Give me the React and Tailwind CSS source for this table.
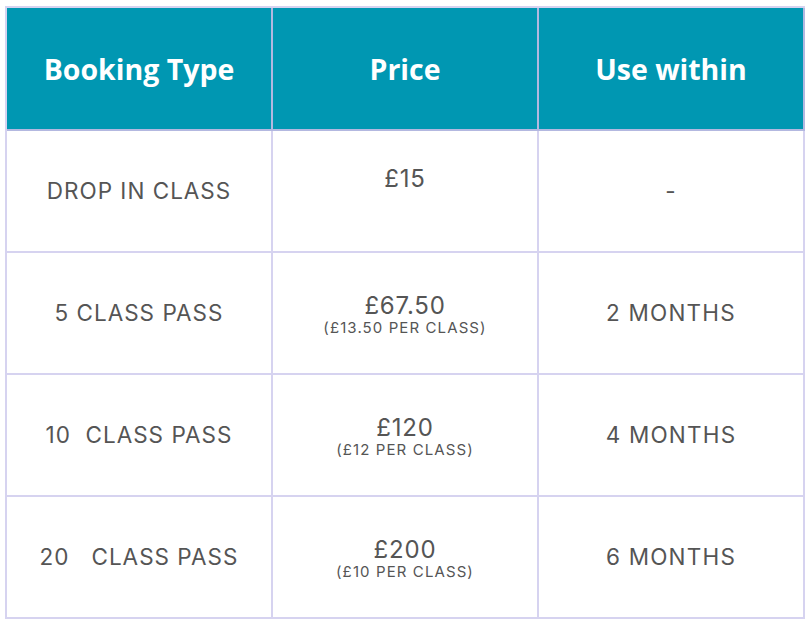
import React from 'react';

const rows = [
  { type: 'DROP IN CLASS', price: '£15', per: '', within: '-' },
  { type: '5 CLASS PASS', price: '£67.50', per: '(£13.50 PER CLASS)', within: '2 MONTHS' },
  { type: '10  CLASS PASS', price: '£120', per: '(£12 PER CLASS)', within: '4 MONTHS' },
  { type: '20   CLASS PASS', price: '£200', per: '(£10 PER CLASS)', within: '6 MONTHS' },
];

const App = () => {
  return (
    <div className="w-[811px] h-[626px] bg-white pl-[5px] pt-[6px]">
      <div className="grid grid-cols-[266px_266px_266px] w-[800px] border-l-2 border-t-2 border-[#d6d3f0]">
        {['Booking Type', 'Price', 'Use within'].map((h) => (
          <div
            key={h}
            className="h-[123px] flex items-center justify-center pt-[2px] bg-[#0097b2] border-r-2 border-b-2 border-[#b3b8e0] text-white text-[28.5px] font-bold font-['Open_Sans',sans-serif]"
          >
            {h}
          </div>
        ))}
        {rows.map((r) => (
          <React.Fragment key={r.type}>
            <div className="h-[122px] flex items-center justify-center border-r-2 border-b-2 border-[#d6d3f0] text-[22.5px] tracking-[1px] text-[#555555] font-['Inter',sans-serif] whitespace-pre">
              {r.type}
            </div>
            <div className="h-[122px] flex flex-col items-center justify-center pt-[2px] border-r-2 border-b-2 border-[#d6d3f0] text-[#555555] font-['Inter',sans-serif]">
              <span className="text-[24px] leading-[26px] tracking-[0.8px]">{r.price}</span>
              {r.per ? (
                <span className="text-[15px] leading-[17px] tracking-[1.1px]">{r.per}</span>
              ) : (
                <span className="h-[27px]" />
              )}
            </div>
            <div className="h-[122px] flex items-center justify-center border-r-2 border-b-2 border-[#d6d3f0] text-[22.5px] tracking-[1.2px] text-[#555555] font-['Inter',sans-serif]">
              {r.within}
            </div>
          </React.Fragment>
        ))}
      </div>
    </div>
  );
};

export default App;
